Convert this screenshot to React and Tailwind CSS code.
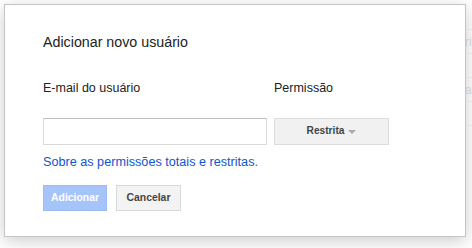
import { useState } from "react";

function App() {
  const [email, setEmail] = useState("");

  return (
    <div
      className="relative w-[472px] h-[248px] overflow-hidden bg-white"
      style={{ fontFamily: '"Liberation Sans", Arial, sans-serif' }}
    >
      {/* faded page behind the dialog */}
      <div className="absolute inset-0 flex flex-col items-end pt-[6px] text-[#e2e2e2] text-[13px]">
        <div className="w-[60px] h-[24px] border-b border-[#f4f4f4]"></div>
        <div className="w-[60px] h-[24px] border-b border-[#f4f4f4] leading-[24px] text-right">ri</div>
        <div className="w-[60px] h-[24px] border-b border-[#f4f4f4]"></div>
        <div className="w-[60px] h-[24px] border-b border-[#f4f4f4] leading-[24px] text-right">a</div>
        <div className="w-[60px] h-[24px] border-b border-[#f4f4f4]"></div>
      </div>

      {/* dialog */}
      <div className="absolute left-[4px] top-[4px] w-[462px] h-[233px] bg-white border border-[#c5c5c5] shadow-[0_4px_16px_rgba(0,0,0,0.2)] pl-[38px] pt-[29px]">
        <div className="text-[14.25px] leading-[16px] text-[#222]">Adicionar novo usuário</div>

        <div className="grid grid-cols-[224px_115px] gap-x-[7px] mt-[30.6px]">
          <div className="text-[12.5px] leading-[15px] text-[#222]">E-mail do usuário</div>
          <div className="text-[12.5px] leading-[15px] text-[#222]">Permissão</div>

          <input
            value={email}
            onChange={(e) => setEmail(e.target.value)}
            className="mt-[22px] h-[27px] border border-[#d9d9d9] border-t-[#c0c0c0] bg-white px-2 text-[13px] focus:outline-none"
          />
          <button className="mt-[22px] h-[27px] flex items-center justify-center gap-[4px] border border-[#dcdcdc] bg-[#f1f1f1] text-[10.2px] font-bold text-[#444]">
            Restrita
            <span className="w-0 h-0 border-l-[4px] border-r-[4px] border-t-[4px] border-l-transparent border-r-transparent border-t-[#aaa] mt-[1px]"></span>
          </button>
        </div>

        <div className="mt-[10.5px] text-[12.65px] leading-[15px] text-[#15c]">
          Sobre as permissões totais e restritas.
        </div>

        <div className="flex gap-[9px] mt-[14.5px]">
          <button
            disabled
            className="w-[64px] h-[26px] bg-[#a5c4fa] border border-[#9cbcf3] text-white text-[10.4px] font-bold"
          >
            Adicionar
          </button>
          <button className="w-[65px] h-[26px] bg-[#f3f3f3] border border-[#d9d9d9] text-[#444] text-[10.4px] font-bold">
            Cancelar
          </button>
        </div>
      </div>
    </div>
  );
}

export default App;
